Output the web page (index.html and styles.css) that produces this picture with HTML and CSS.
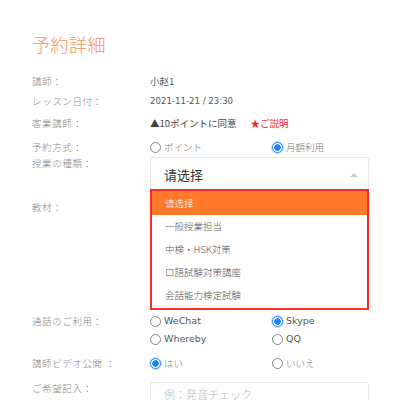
FILE: index.html
```html
<!DOCTYPE html>
<html lang="ja">
<head>
<meta charset="utf-8">
<link rel="stylesheet" href="styles.css">
</head>
<body>
<div class="page">
  <h1 class="title">予約詳細</h1>
  <div class="form">
    <div class="row r1"><div class="label">講師：</div><div class="value">小赵1</div></div>
    <div class="row r2"><div class="label">レッスン日付：</div><div class="value num">2021-11-21 / 23:30</div></div>
    <div class="row r3"><div class="label">客業講師：</div><div class="value">▲10ポイントに同意<span class="note">★ご説明</span></div></div>
    <div class="row r4"><div class="label">予約方式：</div>
      <div class="value radios">
        <span class="opt"><i class="radio"></i>ポイント</span>
        <span class="opt"><i class="radio on"></i>月額利用</span>
      </div>
    </div>
    <div class="row r5"><div class="label">授業の種類：</div>
      <div class="value selwrap">
        <div class="select">请选择<span class="arrow"></span></div>
        <ul class="dropdown">
          <li class="active">请选择</li>
          <li>一般授業担当</li>
          <li>中検・HSK対策</li>
          <li>口語試験対策講座</li>
          <li>会話能力検定試験</li>
        </ul>
      </div>
    </div>
    <div class="row r6"><div class="label">教材：</div><div class="value"></div></div>
    <div class="row r7"><div class="label">通話のご利用：</div>
      <div class="value grid2">
        <span class="opt"><i class="radio"></i>WeChat</span>
        <span class="opt"><i class="radio on"></i>Skype</span>
        <span class="opt"><i class="radio"></i>Whereby</span>
        <span class="opt"><i class="radio"></i>QQ</span>
      </div>
    </div>
    <div class="row r8"><div class="label">講師ビデオ公開 ：</div>
      <div class="value radios">
        <span class="opt"><i class="radio on"></i>はい</span>
        <span class="opt"><i class="radio"></i>いいえ</span>
      </div>
    </div>
    <div class="row r9"><div class="label">ご希望記入：</div>
      <div class="value"><div class="textarea">例：発音チェック</div></div>
    </div>
  </div>
</div>
</body>
</html>
```

FILE: styles.css
```css
* { box-sizing: border-box; }
html, body { margin: 0; padding: 0; background: #fff; }
body {
  font-family: "Noto Sans CJK JP", sans-serif;
  color: #555;
  overflow: hidden;
  height: 400px;
}
.page { padding: 33px 30px 0 32px; }
.title {
  margin: 0;
  font-family: "Noto Sans CJK JP", sans-serif;
  font-weight: 300;
  font-size: 18px;
  line-height: 22px;
  color: #f7925c;
  letter-spacing: 0.5px;
}
.form { display: flex; flex-direction: column; margin-top: 18px; }
.row { display: flex; align-items: flex-start; font-size: 9.5px; line-height: 16px; }
.label {
  width: 118px;
  flex: none;
  font-family: "Noto Sans CJK JP", sans-serif;
  font-weight: 300;
  color: #888;
  letter-spacing: 0.6px;
}
.value { flex: 1; color: #555; font-family: "Noto Sans CJK JP", sans-serif; }
.value.num { font-family: "DejaVu Sans", sans-serif; font-size: 8.6px; color: #555; }
.r1 { margin-top: 0; }
.r2 { margin-top: 4px; }
.r3 { margin-top: 6px; }
.r3 .value { color: #444; }
.note { color: #f22; margin-left: 14px; }
.r4 { margin-top: 8px; }
.radios { display: flex; }
.radios .opt:first-child { width: 122px; }
.opt {
  display: inline-flex;
  align-items: center;
  gap: 3px;
  font-family: "Noto Sans CJK JP", sans-serif;
  font-weight: 300;
  color: #777;
}
.radio {
  width: 11px; height: 11px;
  border: 1px solid #888;
  border-radius: 50%;
  display: inline-block;
  flex: none;
  background: #fff;
}
.radio.on {
  border-color: #1e80ff;
  background: radial-gradient(circle, #1e80ff 0 3px, #fff 3.5px);
  box-shadow: 0 0 0 1px rgba(30,128,255,0.3);
}
.r5 { margin-top: 0; }
.selwrap { position: relative; margin-top: 2px; }
.select {
  width: 219px;
  height: 35px;
  border: 1px solid #e8e8e8;
  border-bottom: none;
  border-radius: 3px 3px 0 0;
  padding: 0 13px;
  display: flex;
  align-items: center;
  font-family: "Noto Sans CJK SC", sans-serif;
  font-size: 13px;
  color: #333;
  position: relative;
}
.arrow {
  position: absolute;
  right: 10px;
  top: 15px;
  border-left: 4px solid transparent;
  border-right: 4px solid transparent;
  border-bottom: 4px solid #ccc;
}
.dropdown {
  position: absolute;
  left: 0;
  top: 32px;
  width: 219px;
  margin: 0;
  padding: 0 0 1px;
  list-style: none;
  background: #fff;
  border: 2px solid #ff2a1f;
  z-index: 2;
}
.dropdown li {
  height: 23px;
  line-height: 23px;
  padding-left: 13px;
  font-family: "Noto Sans CJK JP", sans-serif;
  font-weight: 300;
  font-size: 9.5px;
  color: #555;
}
.dropdown li.active {
  background: #ff7a2b;
  color: #fff;
  height: 24px;
  line-height: 24px;
}
.r6 { margin-top: 7px; }
.r7 { margin-top: 98px; }
.grid2 { display: grid; grid-template-columns: 122px 1fr; row-gap: 2px; }
.grid2 .opt { color: #555; font-family: "DejaVu Sans", sans-serif; font-weight: normal; }
.r8 { margin-top: 8px; }
.r9 { margin-top: 9px; }
.textarea {
  width: 219px;
  height: 30px;
  border: 1px solid #e8e8e8;
  border-radius: 3px;
  margin-top: 2px;
  padding: 3px 13px;
  font-family: "Noto Sans CJK JP", sans-serif;
  font-weight: 300;
  font-size: 11px;
  color: #bbb;
}
```
